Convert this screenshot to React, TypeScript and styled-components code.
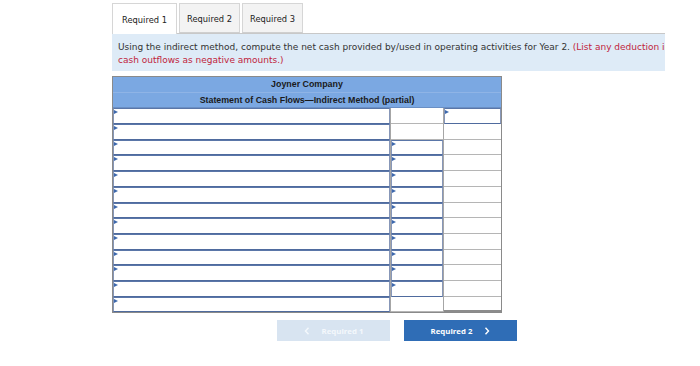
import React from "react";
import styled, { createGlobalStyle } from "styled-components";

const Global = createGlobalStyle`
  html, body { margin: 0; padding: 0; background: #ffffff; }
  body { font-family: "DejaVu Sans", Verdana, sans-serif; }
`;

const Page = styled.div`
  padding: 3px 0 0 112px;
  width: 700px;
  box-sizing: border-box;
`;

const Tabs = styled.div`
  display: flex;
  gap: 2px;
  height: 30px;
`;

const Tab = styled.div<{ $active?: boolean }>`
  box-sizing: border-box;
  width: ${(p) => (p.$active ? 65 : 61)}px;
  height: ${(p) => (p.$active ? 31 : 30)}px;
  display: flex;
  align-items: center;
  justify-content: center;
  padding-top: 1px;
  font-size: 8.3px;
  color: #222;
  background: ${(p) => (p.$active ? "#ffffff" : "#f3f3f3")};
  border: 1px solid #d6d6d6;
  border-bottom: ${(p) => (p.$active ? "none" : "1px solid #cfcfcf")};
  position: relative;
  z-index: 1;
`;

const Instructions = styled.div`
  box-sizing: border-box;
  width: 553px;
  height: 38px;
  background: #deebf7;
  border-top: 1px solid #c8c8c8;
  padding: 7px 0 0 6px;
  font-size: 9px;
  line-height: 13px;
  color: #333;
  white-space: nowrap;
  overflow: hidden;
`;

const Red = styled.span`
  color: #c0243c;
`;

const Sheet = styled.div`
  margin-top: 5px;
  width: 390px;
  box-sizing: border-box;
  display: grid;
  grid-template-columns: 278px 53px 57px;
  grid-auto-rows: 15.7px;
  border: 1px solid #8a8a8a;
  font-family: "Liberation Sans", Arial, sans-serif;
`;

const HeaderCell = styled.div<{ $last?: boolean }>`
  grid-column: 1 / -1;
  background: #7ba8e2;
  display: flex;
  align-items: center;
  justify-content: center;
  font-weight: bold;
  font-size: 8.85px;
  color: #1a1a1a;
  border-bottom: 1px solid ${(p) => (p.$last ? "#6a8fc4" : "#8fb4e6")};
  box-sizing: border-box;
`;

const Cell = styled.div<{ $total?: boolean; $input?: boolean }>`
  box-sizing: border-box;
  background: #fff;
  border-right: 1px solid #a6a6a6;
  border-bottom: ${(p) =>
    p.$total ? "2px solid #8c8c8c" : p.$input ? "none" : "1px solid #b5b5b5"};
  &:nth-child(3n + 2) {
    border-right: none;
  }
  display: flex;
`;

const Input = styled.div`
  flex: 1;
  position: relative;
  box-sizing: border-box;
  border-top: 1px solid #5a76a8;
  border-bottom: 1px solid #4f6b9e;
  border-left: 1px solid #8797b8;
  border-right: 1px solid #8797b8;
  background: #fff;
`;

const Marker = styled.span`
  position: absolute;
  left: 0;
  top: 1px;
  width: 0;
  height: 0;
  border-left: 4px solid #3d68ad;
  border-top: 2px solid transparent;
  border-bottom: 2px solid transparent;
`;

const Buttons = styled.div`
  display: flex;
  gap: 14px;
  margin: 7px 0 0 165px;
`;

const NavButton = styled.div<{ $disabled?: boolean }>`
  width: 113px;
  height: 21px;
  display: flex;
  align-items: center;
  justify-content: center;
  gap: 12px;
  font-family: "Open Sans", "Liberation Sans", sans-serif;
  font-weight: bold;
  font-size: 7.8px;
  color: ${(p) => (p.$disabled ? "#f4f8fc" : "#ffffff")};
  background: ${(p) => (p.$disabled ? "#d8e4f1" : "#2f6db6")};
`;

const Chevron = styled.svg`
  width: 6px;
  height: 8px;
`;

type Row = [boolean, boolean, boolean];

const rows: Row[] = [
  [true, false, true],
  [true, false, false],
  [true, true, false],
  [true, true, false],
  [true, true, false],
  [true, true, false],
  [true, true, false],
  [true, true, false],
  [true, true, false],
  [true, true, false],
  [true, true, false],
  [true, true, false],
  [true, false, false],
];

export default function App() {
  return (
    <Page>
      <Global />
      <Tabs>
        <Tab $active>Required 1</Tab>
        <Tab>Required 2</Tab>
        <Tab>Required 3</Tab>
      </Tabs>
      <Instructions>
        Using the indirect method, compute the net cash provided by/used in operating activities for Year 2.{" "}
        <Red>(List any deduction in</Red>
        <br />
        <Red>cash outflows as negative amounts.)</Red>
      </Instructions>
      <Sheet>
        <HeaderCell>Joyner Company</HeaderCell>
        <HeaderCell $last>Statement of Cash Flows—Indirect Method (partial)</HeaderCell>
        {rows.map((r, i) =>
          r.map((isInput, j) => (
            <Cell
              key={`${i}-${j}`}
              $input={isInput}
              $total={i === rows.length - 1 && j === 2}
            >
              {isInput && (
                <Input>
                  <Marker />
                </Input>
              )}
            </Cell>
          ))
        )}
      </Sheet>
      <Buttons>
        <NavButton $disabled>
          <Chevron viewBox="0 0 6 8">
            <path d="M4.5 0.8 L1.5 4 L4.5 7.2" fill="none" stroke="#f4f8fc" strokeWidth="1.4" />
          </Chevron>
          <span>Required 1</span>
        </NavButton>
        <NavButton>
          <span>Required 2</span>
          <Chevron viewBox="0 0 6 8">
            <path d="M1.5 0.8 L4.5 4 L1.5 7.2" fill="none" stroke="#ffffff" strokeWidth="1.4" />
          </Chevron>
        </NavButton>
      </Buttons>
    </Page>
  );
}
